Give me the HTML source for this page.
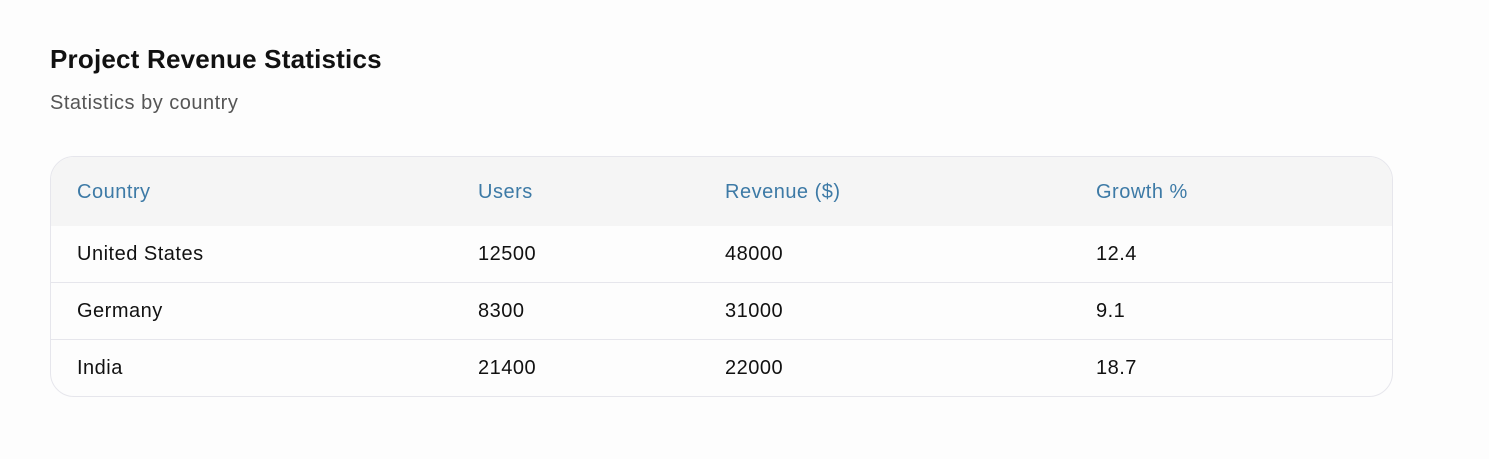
<!DOCTYPE html>
<html><head><meta charset="utf-8"><style>
html,body{margin:0;padding:0;background:#fdfdfd;width:1489px;height:459px;overflow:hidden;font-family:"Liberation Sans",sans-serif;}
h1{position:absolute;left:50px;top:44px;margin:0;font-size:26px;font-weight:bold;color:#111;letter-spacing:0.2px;}
.sub{position:absolute;left:50px;top:92px;font-size:20px;color:#555;letter-spacing:0.5px;}
.card{position:absolute;left:50px;top:156px;width:1341px;height:239px;border:1px solid #e6e6ec;border-radius:24px;overflow:hidden;background:#fdfdfd;}
.row{position:relative;height:56px;border-bottom:1px solid #e6e6ec;}
.row:last-child{border-bottom:none;}
.head{height:69px;background:#f5f5f5;border-bottom:none;}
.row span{position:absolute;top:17px;font-size:20px;color:#111;letter-spacing:0.5px;}
.head span{top:24px;color:#3d7aa6;}
.c1{left:26px}.c2{left:427px}.c3{left:674px}.c4{left:1045px}
</style></head><body>
<h1>Project Revenue Statistics</h1>
<div class="sub">Statistics by country</div>
<div class="card">
<div class="row head"><span class="c1">Country</span><span class="c2">Users</span><span class="c3">Revenue ($)</span><span class="c4">Growth %</span></div>
<div class="row"><span class="c1">United States</span><span class="c2">12500</span><span class="c3">48000</span><span class="c4">12.4</span></div>
<div class="row"><span class="c1">Germany</span><span class="c2">8300</span><span class="c3">31000</span><span class="c4">9.1</span></div>
<div class="row"><span class="c1">India</span><span class="c2">21400</span><span class="c3">22000</span><span class="c4">18.7</span></div>
</div>
</body></html>
